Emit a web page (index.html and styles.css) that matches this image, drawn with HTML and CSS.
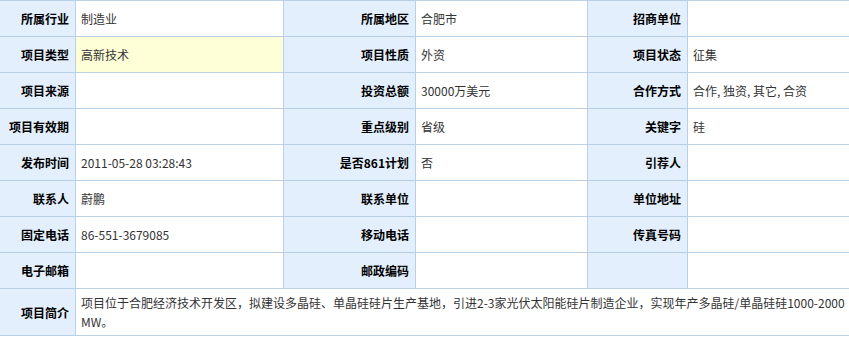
FILE: index.html
```html
<!DOCTYPE html>
<html lang="zh-CN">
<head>
<meta charset="utf-8">
<title>项目信息</title>
<link rel="stylesheet" href="styles.css">
</head>
<body>
<div class="info">
  <div class="lbl">所属行业</div><div class="val">制造业</div>
  <div class="lbl">所属地区</div><div class="val">合肥市</div>
  <div class="lbl">招商单位</div><div class="val"></div>

  <div class="lbl">项目类型</div><div class="val hl">高新技术</div>
  <div class="lbl">项目性质</div><div class="val">外资</div>
  <div class="lbl">项目状态</div><div class="val">征集</div>

  <div class="lbl">项目来源</div><div class="val"></div>
  <div class="lbl">投资总额</div><div class="val">30000万美元</div>
  <div class="lbl">合作方式</div><div class="val">合作, 独资, 其它, 合资</div>

  <div class="lbl">项目有效期</div><div class="val"></div>
  <div class="lbl">重点级别</div><div class="val">省级</div>
  <div class="lbl">关键字</div><div class="val">硅</div>

  <div class="lbl">发布时间</div><div class="val">2011-05-28 03:28:43</div>
  <div class="lbl">是否861计划</div><div class="val">否</div>
  <div class="lbl">引荐人</div><div class="val"></div>

  <div class="lbl">联系人</div><div class="val">蔚鹏</div>
  <div class="lbl">联系单位</div><div class="val"></div>
  <div class="lbl">单位地址</div><div class="val"></div>

  <div class="lbl">固定电话</div><div class="val">86-551-3679085</div>
  <div class="lbl">移动电话</div><div class="val"></div>
  <div class="lbl">传真号码</div><div class="val"></div>

  <div class="lbl">电子邮箱</div><div class="val"></div>
  <div class="lbl">邮政编码</div><div class="val"></div>
  <div class="lbl"></div><div class="val"></div>

  <div class="lbl">项目简介</div>
  <div class="val intro">项目位于合肥经济技术开发区，拟建设多晶硅、单晶硅硅片生产基地，引进2-3家光伏太阳能硅片制造企业，实现年产多晶硅/单晶硅硅1000-2000<br>MW。</div>
</div>
</body>
</html>
```

FILE: styles.css
```css
html, body {
  margin: 0;
  padding: 0;
  background: #ffffff;
  overflow: hidden;
}

.info {
  width: 880px;
  display: grid;
  grid-template-columns: 75px 207px 131px 171px 99px 1fr;
  grid-template-rows: repeat(8, 35px) 46px;
  gap: 1px;
  background: #b9d1e6;
  border-top: 1px solid #b9d1e6;
  border-bottom: 1px solid #b9d1e6;
  font-family: "Noto Sans CJK SC", "Noto Sans", sans-serif;
  font-size: 12px;
}

.lbl,
.val {
  display: flex;
  align-items: center;
  min-width: 0;
  white-space: nowrap;
}

.lbl {
  justify-content: flex-end;
  padding-right: 6px;
  background: #e3effc;
  color: #000;
  font-weight: 700;
}

.val {
  padding-left: 5px;
  background: #ffffff;
  color: #333;
}

.val.hl {
  background: #ffffd7;
}

.intro {
  grid-column: 2 / 7;
  white-space: normal;
  line-height: 19px;
}
```
